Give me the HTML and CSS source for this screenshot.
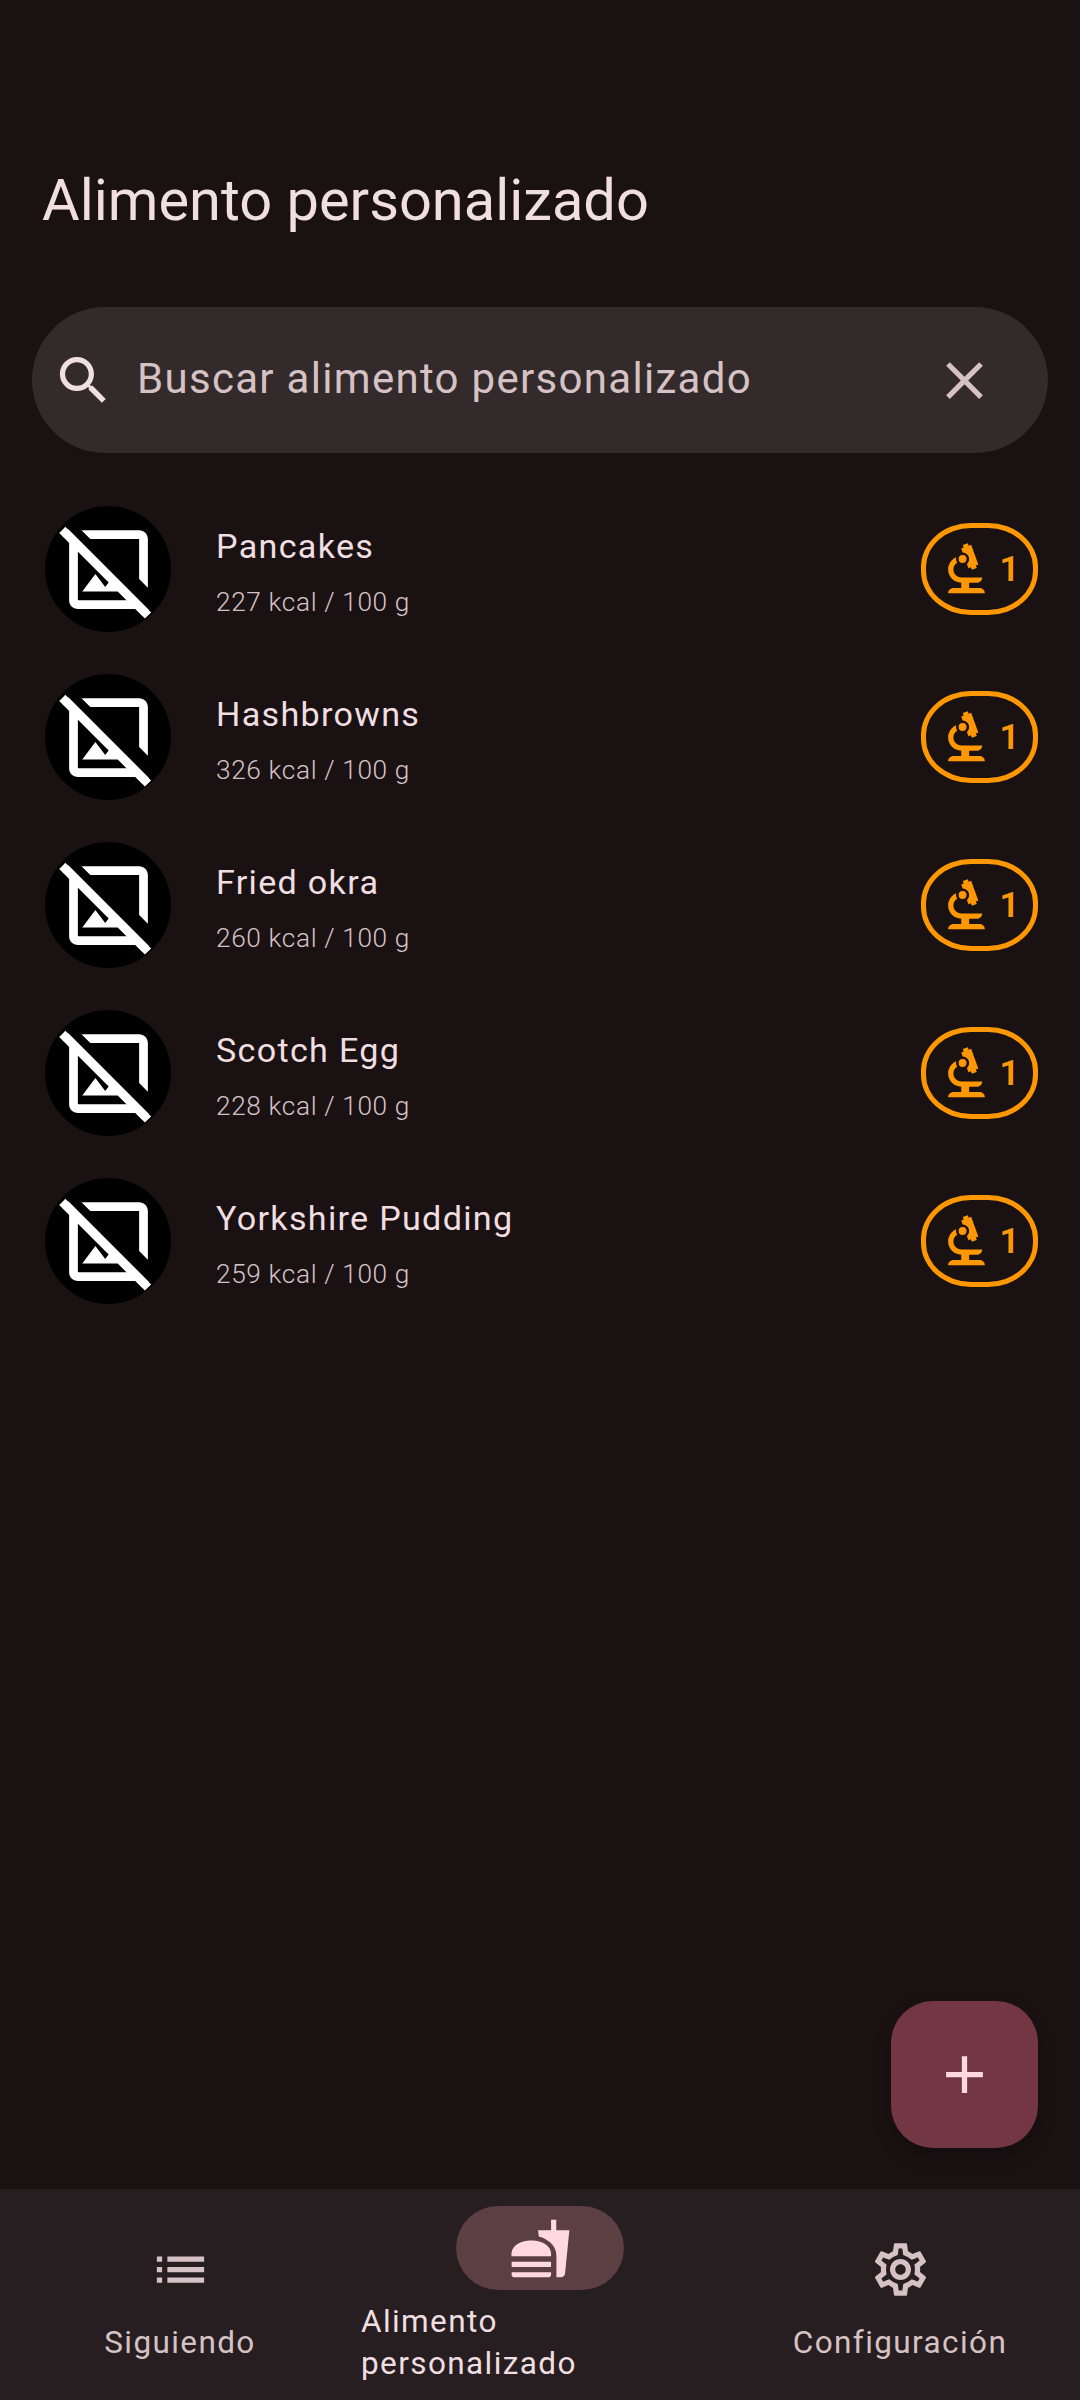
FILE: index.html
```html
<!DOCTYPE html>
<html lang="es">
<head>
    <meta charset="UTF-8">
    <meta name="viewport" content="width=device-width, initial-scale=1.0">
    <title>Alimento personalizado</title>
    <link rel="stylesheet" href="styles.css">
</head>
<body>

<svg class="icon-defs" width="0" height="0">
    <defs>
        <symbol id="i-hide" viewBox="0 0 24 24"><path d="M21 5v11.17l-2-2V5H7.83l-2-2H19c1.1 0 2 .9 2 2zM2.81 2.81L1.39 4.22 3 5.83V19c0 1.1.9 2 2 2h13.17l1.61 1.61 1.41-1.41L2.81 2.81zM5 19V7.83l7.07 7.07-.82 1.1L9 13l-3 4h8.17l2 2H5z"/><path d="M1.44 2.93L21.03 22.51" stroke="#fff" stroke-width="2" fill="none"/></symbol>
        <symbol id="i-biotech" viewBox="0 0 24 24"><path d="M7 19c-1.1 0-2 .9-2 2h14c0-1.1-.9-2-2-2h-4v-2h3c1.1 0 2-.9 2-2h-8c-1.66 0-3-1.34-3-3 0-1.09.59-2.04 1.46-2.56C8.17 9.03 8 8.54 8 8c0-.21.04-.42.09-.62C6.28 8.13 5 9.92 5 12c0 2.76 2.24 5 5 5v2H7z"/><path d="M10.56 5.51C11.91 5.54 13 6.64 13 8c0 .75-.33 1.41-.85 1.87l.59 1.62.94-.34.34.94 1.88-.68-.34-.94.94-.34-2.74-7.52-.94.34-.34-.94-1.88.68.34.94-.94.35.56 1.54z"/><circle cx="10.5" cy="8" r="1.5"/></symbol>
    </defs>
</svg>

<div id="app">
    <main class="content">
        <h1 class="page-title">Alimento personalizado</h1>

        <div class="search-bar">
            <svg class="search-icon" viewBox="0 0 24 24"><path d="M15.5 14h-.79l-.28-.27C15.41 12.59 16 11.11 16 9.5 16 5.91 13.09 3 9.5 3S3 5.91 3 9.5 5.91 16 9.5 16c1.61 0 3.09-.59 4.23-1.57l.27.28v.79l5 4.99L20.49 19l-4.99-5zm-6 0C7.01 14 5 11.99 5 9.5S7.01 5 9.5 5 14 7.01 14 9.5 11.99 14 9.5 14z"/></svg>
            <span class="search-text">Buscar alimento personalizado</span>
            <svg class="clear-icon" viewBox="0 0 24 24"><path d="M19 6.41L17.59 5 12 10.59 6.41 5 5 6.41 10.59 12 5 17.59 6.41 19 12 13.41 17.59 19 19 17.59 13.41 12z"/></svg>
        </div>

        <ul class="food-list">
            <li class="food-row">
                <div class="avatar"><svg><use href="#i-hide"/></svg></div>
                <div class="food-info">
                    <div class="food-name">Pancakes</div>
                    <div class="food-kcal">227 kcal / 100 g</div>
                </div>
                <div class="badge"><svg><use href="#i-biotech"/></svg><span>1</span></div>
            </li>
            <li class="food-row">
                <div class="avatar"><svg><use href="#i-hide"/></svg></div>
                <div class="food-info">
                    <div class="food-name">Hashbrowns</div>
                    <div class="food-kcal">326 kcal / 100 g</div>
                </div>
                <div class="badge"><svg><use href="#i-biotech"/></svg><span>1</span></div>
            </li>
            <li class="food-row">
                <div class="avatar"><svg><use href="#i-hide"/></svg></div>
                <div class="food-info">
                    <div class="food-name">Fried okra</div>
                    <div class="food-kcal">260 kcal / 100 g</div>
                </div>
                <div class="badge"><svg><use href="#i-biotech"/></svg><span>1</span></div>
            </li>
            <li class="food-row">
                <div class="avatar"><svg><use href="#i-hide"/></svg></div>
                <div class="food-info">
                    <div class="food-name">Scotch Egg</div>
                    <div class="food-kcal">228 kcal / 100 g</div>
                </div>
                <div class="badge"><svg><use href="#i-biotech"/></svg><span>1</span></div>
            </li>
            <li class="food-row">
                <div class="avatar"><svg><use href="#i-hide"/></svg></div>
                <div class="food-info">
                    <div class="food-name">Yorkshire Pudding</div>
                    <div class="food-kcal">259 kcal / 100 g</div>
                </div>
                <div class="badge"><svg><use href="#i-biotech"/></svg><span>1</span></div>
            </li>
        </ul>

        <button class="fab">
            <svg viewBox="0 0 24 24"><path d="M19 13h-6v6h-2v-6H5v-2h6V5h2v6h6v2z"/></svg>
        </button>
    </main>

    <nav class="bottom-nav">
        <div class="nav-item">
            <div class="nav-pill">
                <svg viewBox="0 0 24 24"><path d="M3 13h2v-2H3v2zm0 4h2v-2H3v2zm0-8h2V7H3v2zm4 4h14v-2H7v2zm0 4h14v-2H7v2zM7 7v2h14V7H7z"/></svg>
            </div>
            <div class="nav-label">Siguiendo</div>
        </div>
        <div class="nav-item active">
            <div class="nav-pill">
                <svg viewBox="0 0 24 24"><path d="M18.06 22.99h1.66c.84 0 1.53-.64 1.63-1.46L23 5.05h-5V1h-1.97v4.05h-4.97l.3 2.34c1.71.47 3.31 1.32 4.27 2.26 1.44 1.42 2.43 2.89 2.43 5.29v8.05zM1 21.99V21h15.03v.99c0 .55-.45 1-1.01 1H2.01c-.56 0-1.01-.45-1.01-1zm15.03-7c.5-4-3.37-6-7.51-6-4.14 0-8.01 2-7.51 6h15.02zM1.02 17h15v2h-15z"/></svg>
            </div>
            <div class="nav-label">Alimento personalizado</div>
        </div>
        <div class="nav-item">
            <div class="nav-pill">
                <svg viewBox="0 0 24 24"><path d="M19.43 12.98c.04-.32.07-.64.07-.98 0-.34-.03-.66-.07-.98l2.11-1.65c.19-.15.24-.42.12-.64l-2-3.46c-.09-.16-.26-.25-.44-.25-.06 0-.12.01-.17.03l-2.49 1c-.52-.4-1.08-.73-1.69-.98l-.38-2.65C14.46 2.18 14.25 2 14 2h-4c-.25 0-.46.18-.49.42l-.38 2.65c-.61.25-1.17.59-1.69.98l-2.49-1c-.06-.02-.12-.03-.18-.03-.17 0-.34.09-.43.25l-2 3.46c-.13.22-.07.49.12.64l2.11 1.65c-.04.32-.07.65-.07.98 0 .33.03.66.07.98l-2.11 1.65c-.19.15-.24.42-.12.64l2 3.46c.09.16.26.25.44.25.06 0 .12-.01.17-.03l2.49-1c.52.4 1.08.73 1.69.98l.38 2.65c.03.24.24.42.49.42h4c.25 0 .46-.18.49-.42l.38-2.65c.61-.25 1.17-.59 1.69-.98l2.49 1c.06.02.12.03.18.03.17 0 .34-.09.43-.25l2-3.46c.12-.22.07-.49-.12-.64l-2.11-1.65zm-1.98-1.71c.04.31.05.52.05.73 0 .21-.02.43-.05.73l-.14 1.13.89.7 1.08.84-.7 1.21-1.27-.51-1.04-.42-.9.68c-.43.32-.84.56-1.25.73l-1.06.43-.16 1.13-.2 1.35h-1.4l-.19-1.35-.16-1.13-1.06-.43c-.43-.18-.83-.41-1.23-.71l-.91-.7-1.06.43-1.27.51-.7-1.21 1.08-.84.89-.7-.14-1.13c-.03-.31-.05-.54-.05-.74s.02-.43.05-.73l.14-1.13-.89-.7-1.08-.84.7-1.21 1.27.51 1.04.42.9-.68c.43-.32.84-.56 1.25-.73l1.06-.43.16-1.13.2-1.35h1.39l.19 1.35.16 1.13 1.06.43c.43.18.83.41 1.23.71l.91.7 1.06-.43 1.27-.51.7 1.21-1.07.85-.89.7.14 1.13zM12 8c-2.21 0-4 1.79-4 4s1.79 4 4 4 4-1.79 4-4-1.79-4-4-4zm0 6c-1.1 0-2-.9-2-2s.9-2 2-2 2 .9 2 2-.9 2-2 2z"/></svg>
            </div>
            <div class="nav-label">Configuración</div>
        </div>
    </nav>
</div>

</body>
</html>
```

FILE: styles.css
```css
* {
    box-sizing: border-box;
}

body {
    margin: 0;
    background-color: #1a1113;
    font-family: Roboto, 'Liberation Sans', sans-serif;
}

.icon-defs {
    position: absolute;
}

#app {
    display: flex;
    flex-direction: column;
    height: 2400px;
    width: 1080px;
    overflow: hidden;
}

.content {
    position: relative;
    flex: 1;
    padding-top: 163px;
}

.page-title {
    margin: 0 0 70px 42px;
    font-size: 57.75px;
    font-weight: 400;
    line-height: 74px;
    color: #f0dee0;
}

.search-bar {
    display: flex;
    align-items: center;
    height: 146px;
    margin: 0 32px;
    padding: 0 52px 0 20px;
    border-radius: 73px;
    background-color: #322a2b;
}

.search-icon {
    width: 63px;
    height: 63px;
    fill: #f0dee0;
}

.search-text {
    flex: 1;
    margin-left: 22px;
    padding-bottom: 3px;
    font-size: 42px;
    letter-spacing: 1.3px;
    color: #d6c2c4;
}

.clear-icon {
    width: 63px;
    height: 63px;
    fill: #d6c2c4;
}

.food-list {
    list-style: none;
    margin: 32px 0 0;
    padding: 0;
}

.food-row {
    display: flex;
    align-items: center;
    height: 168px;
    padding: 0 42px 0 45px;
}

.avatar {
    display: flex;
    align-items: center;
    justify-content: center;
    width: 126px;
    height: 126px;
    flex-shrink: 0;
    border-radius: 50%;
    background-color: #000;
}

.avatar svg {
    width: 105px;
    height: 105px;
    fill: #fff;
}

.food-info {
    flex: 1;
    margin-left: 45px;
    padding-top: 4px;
}

.food-name {
    font-size: 34.125px;
    line-height: 50px;
    letter-spacing: 1.3px;
    color: #f0dee0;
}

.food-kcal {
    margin-top: 11px;
    font-size: 26.25px;
    font-weight: 300;
    line-height: 40px;
    letter-spacing: 0.62px;
    color: #d6c2c4;
}

.badge {
    display: flex;
    align-items: center;
    justify-content: center;
    width: 117px;
    height: 92px;
    border: 5px solid #ff9800;
    border-radius: 50px / 44px;
    color: #ff9800;
    font-size: 35px;
    font-weight: 600;
}

.badge svg {
    width: 63px;
    height: 63px;
    margin-left: -5px;
    fill: #ff9800;
}

.badge span {
    margin-left: 2px;
}

.fab {
    position: absolute;
    right: 42px;
    bottom: 41px;
    display: flex;
    align-items: center;
    justify-content: center;
    width: 147px;
    height: 147px;
    padding: 0;
    border: none;
    border-radius: 42px;
    background-color: #733643;
    box-shadow: 0 8px 16px rgba(0, 0, 0, 0.25);
}

.fab svg {
    width: 63px;
    height: 63px;
    fill: #ffd9df;
}

.bottom-nav {
    display: flex;
    height: 211px;
    background-color: #261e20;
}

.nav-item {
    display: flex;
    flex: 1;
    flex-direction: column;
    align-items: center;
    justify-content: center;
    padding-top: 2px;
}

.nav-pill {
    display: flex;
    align-items: center;
    justify-content: center;
    width: 168px;
    height: 84px;
    border-radius: 42px;
}

.nav-pill svg {
    width: 63px;
    height: 63px;
    fill: #d6c2c4;
}

.nav-label {
    margin-top: 11px;
    font-size: 31.5px;
    font-weight: 450;
    line-height: 42px;
    letter-spacing: 1.4px;
    color: #d6c2c4;
}

.nav-item.active .nav-pill {
    background-color: #5c3f43;
}

.nav-item.active svg {
    fill: #ffd9df;
}

.nav-item.active .nav-label {
    align-self: flex-start;
    width: 240px;
    margin-left: 1px;
    color: #f0dee0;
}
```
